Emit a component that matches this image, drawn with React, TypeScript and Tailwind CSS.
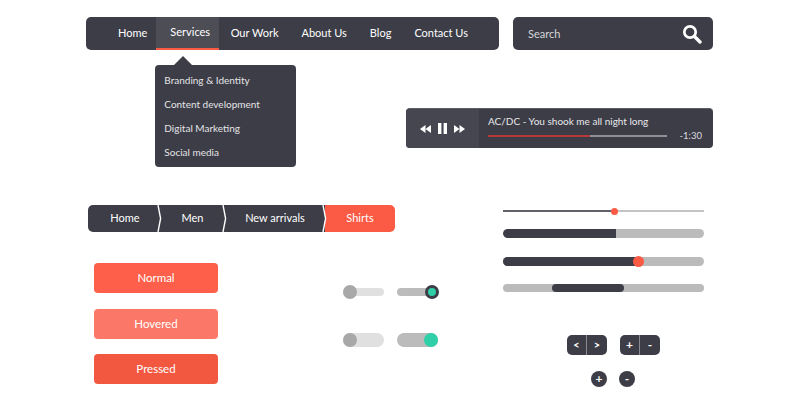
const navItems = ["Our Work", "About Us", "Blog", "Contact Us"];
const menu = ["Branding & Identity", "Content development", "Digital Marketing", "Social media"];

function Chevron() {
  return (
    <svg className="absolute right-[-2px] top-0 z-10" width="5" height="27" viewBox="0 0 5 27">
      <path d="M1 0 L3.6 13.5 L1 27" fill="none" stroke="#ffffff" strokeWidth="1.4" />
    </svg>
  );
}

function Toggle({ track, thick, knob }: { track: string; thick: boolean; knob: React.ReactNode }) {
  return (
    <div className="flex h-[14px] w-[41px] items-center">
      <div className={`relative w-full ${thick ? "h-[14px]" : "h-[8px]"} rounded-full ${track}`}>{knob}</div>
    </div>
  );
}

export default function App() {
  return (
    <div className="flex h-[400px] w-[800px] flex-col overflow-hidden bg-white font-['Lato','Liberation_Sans',sans-serif] text-white">
      {/* Top */}
      <div className="h-[205px] shrink-0 pt-[17px]">
        <div className="ml-[86px] flex gap-[14px]">
          <nav className="flex h-[33px] w-[413px] items-stretch whitespace-nowrap rounded-[5px] bg-[#3c3d47] pl-[32px] text-[11px]">
            <a className="flex items-center pr-[9px]">Home</a>
            <div className="relative flex items-center border-b-2 border-[#fb5a45] bg-[#4c4d55] pl-[14px] pr-[9px]">
              <a>Services</a>
              <div className="absolute left-[-1px] top-[48px] z-20 h-[102px] w-[141px] rounded-[4px] bg-[#3c3d47] pt-[3px] text-[10px] text-[#e4e4e6]">
                <svg className="absolute left-[18px] top-[-9px]" width="20" height="10" viewBox="0 0 20 10">
                  <path d="M0 10 L10 0 L20 10 Z" fill="#3c3d47" />
                </svg>
                {menu.map((m) => (
                  <div key={m} className="flex h-[24px] items-center pl-[9px]">{m}</div>
                ))}
              </div>
            </div>
            {navItems.map((n) => (
              <a key={n} className="flex items-center px-[11.5px]">{n}</a>
            ))}
          </nav>
          <div className="flex h-[33px] w-[200px] items-center justify-between rounded-[5px] bg-[#3c3d47] pl-[15px] pr-[11px] text-[11px] text-[#d6d6d9]">
            <span className="pt-[1px]">Search</span>
            <svg width="20" height="20" viewBox="0 0 20 20">
              <circle cx="8" cy="8" r="5.7" fill="none" stroke="#ffffff" strokeWidth="2.7" />
              <path d="M12.5 12.5 L18 18" stroke="#ffffff" strokeWidth="3.4" strokeLinecap="round" />
            </svg>
          </div>
        </div>
        <div className="ml-[406px] mt-[58px] flex h-[40px] w-[307px] overflow-hidden rounded-[4px] border-t border-[#5c5d65] bg-[#3c3d47]">
          <div className="flex w-[73px] items-center justify-center gap-[7px] bg-[#45464f]">
            <svg width="11" height="8" viewBox="0 0 11 8"><path d="M5.5 0 V8 L0 4 Z M11 0 V8 L5.5 4 Z" fill="#fff" /></svg>
            <svg width="9" height="11" viewBox="0 0 9 11"><path d="M0 0 H3.4 V11 H0 Z M5.6 0 H9 V11 H5.6 Z" fill="#fff" /></svg>
            <svg width="11" height="8" viewBox="0 0 11 8"><path d="M0 0 V8 L5.5 4 Z M5.5 0 V8 L11 4 Z" fill="#fff" /></svg>
          </div>
          <div className="flex-1 pl-[9px] pr-[11px] pt-[5px]">
            <div className="text-[10px] leading-[15px] text-[#e8e8ea]">AC/DC - You shook me all night long</div>
            <div className="flex items-center justify-between">
              <div className="flex h-[1.5px] w-[179px] bg-[#8f9096]">
                <div className="h-full w-[102px] bg-[#b8383a]" />
              </div>
              <span className="text-[9.5px] leading-[14px] text-[#dcdce0]">-1:30</span>
            </div>
          </div>
        </div>
      </div>

      {/* Bottom */}
      <div className="ml-[88px] flex">
        <div className="w-[350px]">
          <div className="flex h-[27px] w-[307px] items-stretch overflow-hidden rounded-[5px] text-[11px]">
            <div className="relative flex w-[72px] items-center justify-center bg-[#3c3d47] pl-[2px]">Home<Chevron /></div>
            <div className="relative flex w-[65px] items-center justify-center bg-[#3c3d47]">Men<Chevron /></div>
            <div className="relative flex w-[100px] items-center justify-center bg-[#3c3d47]">New arrivals<Chevron /></div>
            <div className="flex w-[70px] items-center justify-center bg-[#fb5a45]">Shirts</div>
          </div>
          <div className="mt-[31px] flex">
            <div className="ml-[6px] flex w-[124px] flex-col text-[11.5px]">
              <button className="h-[30px] rounded-[4px] bg-[#fe5f4a]">Normal</button>
              <button className="mt-[16px] h-[30px] rounded-[4px] bg-[#fb7868]">Hovered</button>
              <button className="mt-[15px] h-[30px] rounded-[4px] bg-[#f2583f]">Pressed</button>
            </div>
            <div className="ml-[125px] mt-[22px] flex flex-col gap-[34px]">
              <div className="flex gap-[13px]">
                <Toggle track="bg-[#e0e0e0]" thick={false} knob={<span className="absolute left-0 top-[-3px] h-[14px] w-[14px] rounded-full bg-[#a8a8a8]" />} />
                <Toggle track="bg-[#bbbbbb]" thick={false} knob={<span className="absolute right-[-1px] top-[-3px] h-[14px] w-[14px] rounded-full border-[3px] border-[#3c3d47] bg-[#2fcfa8]" />} />
              </div>
              <div className="flex gap-[13px]">
                <Toggle track="bg-[#e0e0e0]" thick knob={<span className="absolute left-0 top-0 h-[14px] w-[14px] rounded-full bg-[#a8a8a8]" />} />
                <Toggle track="bg-[#bbbbbb]" thick knob={<span className="absolute right-0 top-0 h-[14px] w-[14px] rounded-full bg-[#2fcfa8]" />} />
              </div>
            </div>
          </div>
        </div>

        <div className="ml-[65px] w-[201px]">
          <div className="relative mt-[5px] flex h-[2px] bg-[#c4c4c4]">
            <div className="h-full w-[111px] bg-[#62636a]" />
            <span className="absolute left-[108px] top-[-2.5px] h-[7px] w-[7px] rounded-full bg-[#fb5a45]" />
          </div>
          <div className="mt-[17px] flex h-[9px] overflow-hidden rounded-full bg-[#bbbbbb]">
            <div className="h-full w-[113px] rounded-l-full bg-[#3c3d47]" />
          </div>
          <div className="relative mt-[19px] flex h-[9px] rounded-full bg-[#bbbbbb]">
            <div className="h-full w-[135px] rounded-l-full bg-[#3c3d47]" />
            <span className="absolute left-[130px] top-[-1px] h-[11px] w-[11px] rounded-full bg-[#fb5a45]" />
          </div>
          <div className="mt-[18px] flex h-[8px] rounded-full bg-[#bbbbbb] pl-[49px]">
            <div className="h-full w-[72px] rounded-full bg-[#3c3d47]" />
          </div>
          <div className="ml-[64px] mt-[43px] flex gap-[13px]">
            <div className="flex h-[20px] w-[40px] rounded-[5px] bg-[#3c3d47] text-[11px] font-bold">
              <span className="flex w-[20px] items-center justify-center border-r border-[#8a8b91]">&lt;</span>
              <span className="flex w-[20px] items-center justify-center">&gt;</span>
            </div>
            <div className="flex h-[20px] w-[40px] rounded-[5px] bg-[#3c3d47] text-[12px] font-bold">
              <span className="flex w-[20px] items-center justify-center border-r border-[#8a8b91]">+</span>
              <span className="flex w-[20px] items-center justify-center">-</span>
            </div>
          </div>
          <div className="ml-[88px] mt-[16px] flex gap-[12px]">
            <span className="flex h-[16px] w-[16px] items-center justify-center rounded-full bg-[#3c3d47] text-[12px] font-bold leading-none">+</span>
            <span className="flex h-[16px] w-[16px] items-center justify-center rounded-full bg-[#3c3d47] text-[12px] font-bold leading-none">-</span>
          </div>
        </div>
      </div>
    </div>
  );
}
